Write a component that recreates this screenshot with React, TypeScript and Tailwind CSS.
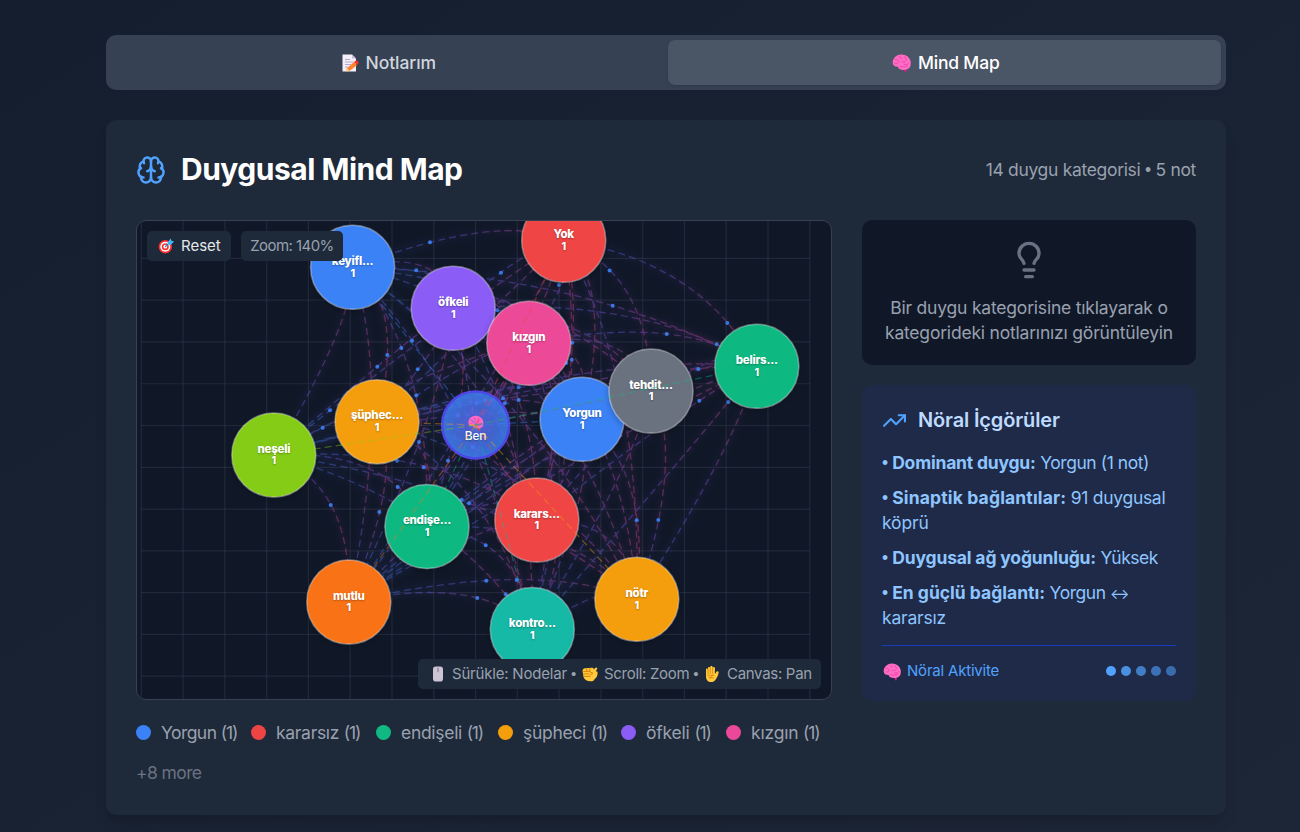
import React from "react";
import { Brain, Lightbulb, TrendingUp } from "lucide-react";

type MapNode = { label: string; x: number; y: number; color: string };

const NODES: MapNode[] = [
  { label: "Yorgun", x: 582, y: 419.3, color: "#3b82f6" },
  { label: "karars...", x: 536.8, y: 520, color: "#ef4444" },
  { label: "endişe...", x: 427, y: 526.5, color: "#10b981" },
  { label: "şüphec...", x: 377, y: 421.8, color: "#f59e0b" },
  { label: "öfkeli", x: 453.2, y: 308.3, color: "#8b5cf6" },
  { label: "kızgın", x: 528.8, y: 343.2, color: "#ec4899" },
  { label: "tehdit...", x: 651, y: 391, color: "#6b7280" },
  { label: "neşeli", x: 273.8, y: 455, color: "#84cc16" },
  { label: "mutlu", x: 348.8, y: 602, color: "#f97316" },
  { label: "kontro...", x: 532.3, y: 629.5, color: "#14b8a6" },
  { label: "keyifl...", x: 352.6, y: 267.3, color: "#3b82f6" },
  { label: "Yok", x: 563.7, y: 240.3, color: "#ef4444" },
  { label: "belirs...", x: 756.8, y: 366.2, color: "#10b981" },
  { label: "nötr", x: 636.8, y: 599.3, color: "#f59e0b" },
];

const CENTER = { x: 475.6, y: 425 };

const PULSES: [number, number][] = [
  [330, 410.3], [322.7, 427.7], [430, 242.3], [416.3, 270.3], [501, 272.7], [559, 285],
  [497.3, 310.3], [412, 340.7], [401.3, 348], [387.3, 355], [377.3, 366.7], [417.7, 369.3],
  [416.3, 395.3], [419, 442], [572.3, 342.7], [571.7, 359.7], [566.3, 363], [518.7, 387.3],
  [518.7, 400], [503, 398.3], [504.7, 403.3], [485, 400], [458, 415.3], [609.6, 270.4],
  [472.7, 447], [476.7, 403], [612.7, 305.7], [666.7, 334], [727.3, 323], [716.7, 344.3],
  [698.3, 369], [699.3, 400.7], [728.3, 402], [330.7, 505], [397, 460.7], [423.7, 467.3],
  [448, 460.7], [397.7, 487], [379.3, 512], [461.7, 499.7], [469, 503.3], [485.7, 545.3],
  [486.3, 580.7], [516.7, 580], [477.3, 598], [505.7, 594.3], [636.7, 520.3], [658.3, 520],
];

const LEGEND = [
  { label: "Yorgun", size: "w-[100px] tracking-[-0.55px]", dot: "bg-[#3b82f6]" },
  { label: "kararsız", size: "w-[110px] tracking-[-0.3px]", dot: "bg-[#ef4444]" },
  { label: "endişeli", size: "w-[107px] tracking-[-0.3px]", dot: "bg-[#10b981]" },
  { label: "şüpheci", size: "w-[108px] tracking-[-0.3px]", dot: "bg-[#f59e0b]" },
  { label: "öfkeli", size: "w-[90px] tracking-[-0.2px]", dot: "bg-[#8b5cf6]" },
  { label: "kızgın", size: "w-[94px] tracking-[-0.2px]", dot: "bg-[#ec4899]" },
];

const STEP = 41.78;

function links() {
  const out: string[] = [];
  for (let i = 0; i < NODES.length; i++) {
    for (let j = i + 1; j < NODES.length; j++) {
      const a = NODES[i];
      const b = NODES[j];
      const cx = (a.x + b.x) / 2 + 42;
      const cy = (a.y + b.y) / 2 - 42;
      out.push(`M${a.x} ${a.y} Q${cx} ${cy} ${b.x} ${b.y}`);
    }
  }
  return out;
}

function BrainShape() {
  return (
    <>
      <path d="M11.6 15.4 13 19.6 14.6 18.6 13.9 15z" fill="#e3168b" />
      <path
        d="M.8 10.2C.2 6 4 1.700 9 1.500c5-.2 9.200 3 9.700 7.300.5 3.900-.7 6.700-3.500 7.500-2.500.7-5.200 1-7.600-.2-1-.6-1.500-1.500-1.600-2.400-3 .2-5-1.200-5.200-3.500z"
        fill="#ff6cc4"
      />
      <path
        d="M3 6.500c1.500-.4 2.800.2 3.300 1.500M7.200 3.200c.2 1.500 1.400 2.200 2.800 2M13 3.800c-.4 1.600.3 2.500 1.700 2.700M3 10.500c1.800.2 3-.4 3.600-1.500M10 8.500c1.500.9 3 .7 4-.6M12.200 11.200c1.500.8 3 .4 4.200-.8M8 13.200c2.500.9 5 .8 7.500-.3"
        fill="none"
        stroke="#f23fa6"
        strokeWidth=".9"
        strokeLinecap="round"
      />
    </>
  );
}

function BrainEmoji({ className }: { className: string }) {
  return (
    <svg viewBox="0 0 20 20" className={className}>
      <BrainShape />
    </svg>
  );
}

function MemoEmoji({ className }: { className: string }) {
  return (
    <svg viewBox="0 0 20 20" className={className}>
      <path d="M2.500 1.500h9.500l4 4V18.500h-13.500z" fill="#f3eef8" />
      <path d="M12 1.500v4h4z" fill="#c8bcd6" />
      <path d="M5 6.500h5M5 9h8.500M5 11.500h6M5 14h3.500" stroke="#b9a9c9" strokeWidth="1" />
      <path d="M7 15.300 14 9l3 3.200-7 5.300-3.400.8z" fill="#ff822d" />
      <path d="M7 15.300 9.600 17.700 6.200 18.500z" fill="#ffce7c" />
      <path d="M14.800 8.300c1-1 2.400-.9 3.200 0s.7 2.200-.2 3l-.8.700-3-3.100z" fill="#f8312f" />
    </svg>
  );
}

function TargetEmoji({ className }: { className: string }) {
  return (
    <svg viewBox="0 0 18 18" className={className}>
      <circle cx="8.300" cy="9.700" r="6.700" fill="#f8312f" />
      <circle cx="8.300" cy="9.700" r="5" fill="#fff" />
      <circle cx="8.300" cy="9.700" r="3.500" fill="#f8312f" />
      <circle cx="8.300" cy="9.700" r="1.900" fill="#fff" />
      <path d="M8 10 13.500 4.500" stroke="#1b8fd0" strokeWidth="1.100" />
      <path d="M10.800 5.200 13.600 1.500l.9 2.200 2.500.8-3.300 3.400-2.500-.300z" fill="#3cb8ff" />
    </svg>
  );
}

function MouseEmoji({ className }: { className: string }) {
  return (
    <svg viewBox="0 0 18 18" className={className}>
      <rect x="4" y="1.500" width="10" height="15" rx="2.800" fill="#cdc4d6" />
      <path d="M9 1.500v6" stroke="#9b8fa8" strokeWidth=".7" />
      <rect x="8.200" y="3.200" width="1.600" height="3.600" rx=".8" fill="#998ea4" />
    </svg>
  );
}

function FistEmoji({ className }: { className: string }) {
  return (
    <svg viewBox="0 0 18 18" className={className}>
      <path
        d="M1.500 6c0-1.700 1-2.800 2.500-2.800l6.700-.4c1.400 0 2 .6 2.100 1.500l1.800-1.600c1-.7 2.100.3 1.500 1.300L14.800 6.200l1.700.5c.4 3-.5 5.700-3 7.500-.6 1.500-2 2.300-4 2.100-3.500 0-5.800-1.500-6.900-4z"
        fill="#ffc83d"
      />
      <path d="M2.500 6.400h5.800M2.600 8.900h5.300M3.200 11.400h5M5.500 3.800l.3 2M8.800 3.500v3.200l3.200 1.600c-1.600.3-2.900 1.200-3.300 3.200" fill="none" stroke="#d67d00" strokeWidth=".9" strokeLinecap="round" />
    </svg>
  );
}

function HandEmoji({ className }: { className: string }) {
  return (
    <svg viewBox="0 0 18 18" className={className}>
      <path
        d="M3 4.500c0-1.200 1.800-1.300 2 0V3c0-1.400 2-1.400 2.200 0V2c.1-1.400 2.300-1.400 2.400 0v.8c.3-1.300 2.200-1.200 2.300.2V9l1.600-2.200c.8-1 2.500-.2 2.100 1.200-.6 2.200-1.300 4.300-2.800 6.200-1 1.900-2.400 2.800-4.700 2.800-3.200 0-5.100-2.200-5.100-5.600z"
        fill="#ffc83d"
      />
      <path d="M5 4.500v4M7.200 3v5.300M9.600 3v5.300M4.500 10.200h5.700M10.500 10.300c-2 .3-3 1.300-3.100 3M6 12.300l4.500.8" fill="none" stroke="#d67d00" strokeWidth=".8" strokeLinecap="round" />
    </svg>
  );
}

function Bullet() {
  return <span className="font-['Liberation_Sans'] leading-none">•</span>;
}

function MindMapCanvas() {
  const columns = Array.from({ length: 17 }, (_, i) => 141.3 + i * STEP);
  const rows = Array.from({ length: 11 }, (_, i) => 258.4 + i * STEP);
  return (
    <svg width="694" height="478" viewBox="137 221 694 478" className="block">
      <defs>
        <linearGradient id="link" x1="0" y1="0" x2="1" y2="0">
          <stop offset="0" stopColor="#3b82f6" />
          <stop offset="0.5" stopColor="#8b5cf6" />
          <stop offset="1" stopColor="#ec4899" />
        </linearGradient>
        <radialGradient id="core">
          <stop offset="0" stopColor="#6366f1" />
          <stop offset="0.5" stopColor="#4a6ee6" />
          <stop offset="1" stopColor="#3b82f6" />
        </radialGradient>
        <filter id="glow" x="-10%" y="-10%" width="120%" height="120%">
          <feGaussianBlur stdDeviation="3" result="b" />
          <feMerge>
            <feMergeNode in="b" />
            <feMergeNode in="SourceGraphic" />
          </feMerge>
        </filter>
        <filter id="shade" x="-20%" y="-20%" width="140%" height="140%">
          <feDropShadow dx="0" dy="2" stdDeviation="3" floodColor="#000" floodOpacity="0.3" />
        </filter>
      </defs>

      <g stroke="#374151" strokeOpacity="0.42" strokeWidth="1.2">
        {columns.map((x) => (
          <line key={x} x1={x} x2={x} y1="221" y2="699" />
        ))}
        {rows.map((y) => (
          <line key={y} x1="141" x2="810" y1={y} y2={y} />
        ))}
      </g>

      <g filter="url(#glow)">
        <g fill="none" stroke="url(#link)" strokeWidth="1.300" strokeDasharray="7 4.200" opacity="0.34">
          {links().map((d) => (
            <path key={d} d={d} />
          ))}
        </g>
      </g>
      <g fill="#3b82f6" opacity="0.9">
        {PULSES.map(([x, y]) => (
          <circle key={`${x}-${y}`} cx={x} cy={y} r="2" />
        ))}
      </g>

      <circle cx={CENTER.x} cy={CENTER.y} r="33.500" fill="url(#core)" fillOpacity="0.85" stroke="#4f46e5" strokeWidth="2.500" />
      <g transform="translate(467.800 414.500) scale(.83)">
        <BrainShape />
      </g>
      <text x={CENTER.x} y="440" textAnchor="middle" fill="#fff" className="text-[12px] font-medium tracking-[-0.2px] [text-shadow:0_1px_2px_rgba(0,0,0,0.3)]">
        Ben
      </text>

      {NODES.map((n) => (
        <g key={n.label}>
          <line
            x1={CENTER.x}
            y1={CENTER.y}
            x2={n.x}
            y2={n.y}
            stroke={n.color}
            strokeWidth="1.300"
            strokeDasharray="7 4.200"
            opacity="0.4"
          />
          <circle cx={n.x} cy={n.y} r="42" fill={n.color} stroke="#fff" strokeOpacity="0.35" strokeWidth="1.400" filter="url(#shade)" />
          <g fill="#fff" textAnchor="middle" className="font-extrabold [text-shadow:0_1px_2px_rgba(0,0,0,0.3)]">
            <text x={n.x} y={n.y - 2.500} className="text-[11.500px] tracking-[-0.25px]">
              {n.label}
            </text>
            <text x={n.x} y={n.y + 9.300} className="text-[10.500px]">
              1
            </text>
          </g>
        </g>
      ))}
    </svg>
  );
}

export default function App() {
  return (
    <div className="h-[832px] overflow-hidden bg-linear-to-br from-[#151e2e] to-[#1d2636] pt-[35px] pl-[106px] font-['Inter','Liberation_Sans',sans-serif] text-[17.5px] leading-[25px] tracking-[-0.2px]">
      <div className="flex w-[1120px] flex-col gap-[30px]">
        <div className="grid h-[55px] grid-cols-2 gap-[3px] rounded-[10px] bg-[#364153] p-[5px] font-medium tracking-[-0.1px]">
          <div className="flex items-center justify-center gap-[6px] text-[#d1d5dc]">
            <MemoEmoji className="size-[20px]" />
            <span>Notlarım</span>
          </div>
          <div className="flex items-center justify-center gap-[6px] rounded-[7px] bg-[#4a5565] pl-[3px] tracking-[-0.2px] text-white shadow-sm">
            <BrainEmoji className="size-[20px]" />
            <span>Mind Map</span>
          </div>
        </div>

        <main className="rounded-[10px] bg-[#1e2939] p-[30px] shadow-lg">
          <header className="mb-[30px] flex h-10 items-center justify-between">
            <div className="flex items-center gap-[15px]">
              <Brain className="size-[30px] text-[#51a2ff]" />
              <h2 className="pb-[2px] text-[30px] leading-[38px] font-bold tracking-[-0.5px] text-white">Duygusal Mind Map</h2>
            </div>
            <span className="pb-[2px] tracking-[-0.32px] text-[#99a1af]">
              14 duygu kategorisi <Bullet /> 5 not
            </span>
          </header>

          <div className="grid grid-cols-[696px_334px] items-start gap-[30px]">
            <section>
              <div className="relative h-[480px] overflow-hidden rounded-[10px] border border-[#364153] bg-[#101828]">
                <MindMapCanvas />
                <div className="absolute top-[10px] left-[10px] flex gap-[10px] text-[15px] leading-5">
                  <div className="flex h-[30px] w-[84px] items-center gap-[6px] rounded-[5px] bg-[#1e2939] pl-[10px] tracking-[0px] text-[#e5e7eb]">
                    <TargetEmoji className="size-[18px]" />
                    <span>Reset</span>
                  </div>
                  <div className="flex h-[30px] w-[102px] items-center justify-center rounded-[5px] bg-[#1e2939] tracking-[-0.55px] text-[#99a1af]">Zoom: 140%</div>
                </div>
                <div className="absolute right-[10px] bottom-[10px] flex h-[30px] w-[403px] items-center rounded-[5px] bg-[#1e2939] pl-[11px] text-[15px] leading-5 whitespace-nowrap text-[#99a1af]">
                  <MouseEmoji className="mr-[5px] size-[18px] shrink-0" />
                  <span className="w-[129px] shrink-0">
                    Sürükle: Nodelar <Bullet />
                  </span>
                  <FistEmoji className="mr-[5px] size-[18px] shrink-0" />
                  <span className="w-[98px] shrink-0 tracking-[-0.3px]">
                    Scroll: Zoom <Bullet />
                  </span>
                  <HandEmoji className="mr-[6px] ml-px size-[18px] shrink-0" />
                  <span className="tracking-[-0.3px]">Canvas: Pan</span>
                </div>
              </div>
              <div className="mt-5 flex flex-wrap gap-[15px] text-[#99a1af]">
                {LEGEND.map((item) => (
                  <div key={item.label} className={`flex items-center gap-[10px] whitespace-nowrap ${item.size}`}>
                    <span className={`size-[15px] shrink-0 rounded-full ${item.dot}`} />
                    <span>
                      {item.label} <span className="tracking-[-1.2px]">(1)</span>
                    </span>
                  </div>
                ))}
                <span className="tracking-[-0.6px] text-[#6a7282]">+8 more</span>
              </div>
            </section>

            <aside className="flex flex-col gap-5">
              <div className="flex flex-col items-center rounded-[10px] bg-[#101828] p-5 text-center text-[#99a1af]">
                <Lightbulb className="mb-[15px] size-10 text-[#6a7282]" />
                <p className="whitespace-nowrap">
                  Bir duygu kategorisine tıklayarak o
                  <br />
                  kategorideki notlarınızı görüntüleyin
                </p>
              </div>

              <div className="rounded-[10px] bg-[#1e2a47] p-5 text-[#8ec5ff]">
                <h3 className="mb-[15px] flex items-center gap-[11px] text-[20px] leading-[30px] font-semibold tracking-[-0.15px] text-[#bedbff]">
                  <TrendingUp className="size-[25px] text-[#51a2ff]" />
                  Nöral İçgörüler
                </h3>
                <div className="flex flex-col gap-[10px] tracking-[-0.45px]">
                  <p>
                    <Bullet /> <strong className="font-bold tracking-[-0.2px]">Dominant duygu:</strong> Yorgun (1 not)
                  </p>
                  <p>
                    <Bullet /> <strong className="font-bold tracking-[0.15px]">Sinaptik bağlantılar:</strong> <span className="tracking-[-0.3px]">91 duygusal</span>
                    <br />
                    <span className="tracking-[-0.1px]">köprü</span>
                  </p>
                  <p>
                    <Bullet /> <strong className="font-bold tracking-[-0.15px]">Duygusal ağ yoğunluğu:</strong> Yüksek
                  </p>
                  <p>
                    <Bullet /> <strong className="font-bold tracking-[0px]">En güçlü bağlantı:</strong> Yorgun <span className="text-[14.5px] leading-none">↔</span>
                    <br />
                    <span className="tracking-[-0.2px]">kararsız</span>
                  </p>
                </div>
                <div className="mt-[15px] flex items-center justify-between border-t border-[#193cb8] pt-[15px] text-[15px] leading-5">
                  <div className="flex items-center gap-[5px] text-[#51a2ff]">
                    <BrainEmoji className="ml-px size-[19px]" />
                    <span>Nöral Aktivite</span>
                  </div>
                  <div className="flex gap-[5px]">
                    <span className="size-[10px] rounded-full bg-[#51a2ff]" />
                    <span className="size-[10px] rounded-full bg-[#51a2ff] opacity-85" />
                    <span className="size-[10px] rounded-full bg-[#51a2ff] opacity-70" />
                    <span className="size-[10px] rounded-full bg-[#51a2ff] opacity-60" />
                    <span className="size-[10px] rounded-full bg-[#51a2ff] opacity-55" />
                  </div>
                </div>
              </div>
            </aside>
          </div>
        </main>
      </div>
    </div>
  );
}
